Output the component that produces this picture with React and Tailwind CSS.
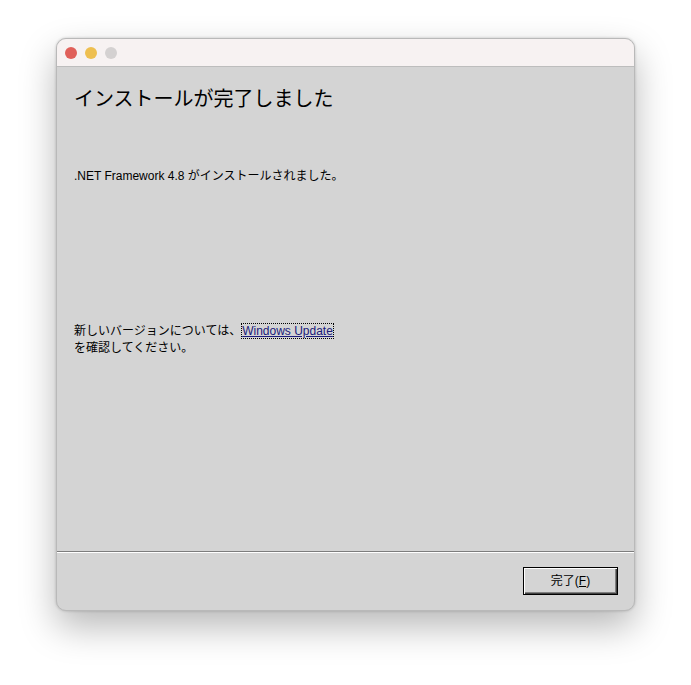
export default function App() {
  const font = { fontFamily: '"Liberation Sans", "Noto Sans CJK JP", sans-serif' };

  return (
    <div className="min-h-screen w-full bg-white pl-[56px] pt-[38px]" style={font}>
      <div className="flex h-[573px] w-[579px] flex-col overflow-hidden rounded-[10px] border border-[#b9b9b9] bg-[#d4d4d4] shadow-[0_16px_36px_rgba(0,0,0,0.28),0_0_3px_rgba(0,0,0,0.2)]">
        {/* title bar */}
        <div className="flex h-[28px] shrink-0 items-center gap-[8px] border-b border-[#bdbdbd] bg-[#f7f2f2] pl-[8px]">
          <span className="h-[12px] w-[12px] rounded-full bg-[#e0605a]" />
          <span className="h-[12px] w-[12px] rounded-full bg-[#eebf50]" />
          <span className="h-[12px] w-[12px] rounded-full bg-[#d4d1d1]" />
        </div>

        {/* content */}
        <div className="flex flex-1 flex-col">
          <div className="flex-1 pl-[17px] pt-[19px] text-black">
            <h1 className="text-[20px] leading-[26px] font-normal">
              インストールが完了しました
            </h1>
            <p className="mt-[56px] text-[12px] leading-[17px]">
              .NET Framework 4.8 がインストールされました。
            </p>
            <p className="mt-[138px] text-[12px] leading-[17px]">
              新しいバージョンについては、
              <a className="border border-dotted border-black text-[#1a1a7a] underline">
                Windows Update
              </a>
              <br />
              を確認してください。
            </p>
          </div>

          {/* separator */}
          <div className="h-[1px] bg-[#7d7d7d]" />
          <div className="h-[1px] bg-white" />

          <div className="flex h-[57px] justify-end pr-[16px] pt-[14px]">
            <button className="h-[28px] w-[95px] border border-black bg-[#d4d4d4] text-[12px] text-black shadow-[inset_1px_1px_0_#ffffff,inset_-1px_-1px_0_#404040,inset_-2px_-2px_0_#808080]">
              完了(<span className="underline">F</span>)
            </button>
          </div>
        </div>
      </div>
    </div>
  );
}
